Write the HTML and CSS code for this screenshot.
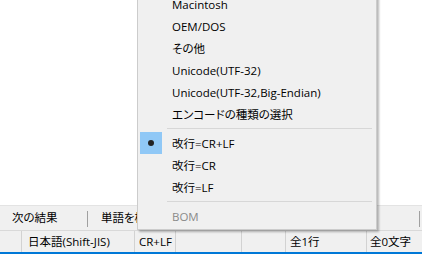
FILE: index.html
```html
<!DOCTYPE html>
<html lang="ja">
<head>
<meta charset="utf-8">
<link rel="stylesheet" href="styles.css">
</head>
<body>
<div class="app">
  <div class="editor"></div>
  <div class="findbar">
    <span class="fb-btn fb-next">次の結果</span>
    <span class="fb-sep"></span>
    <span class="fb-btn">単語を検索</span>
    <span class="fb-spacer"></span>
    <span class="fb-sep fb-sep-right"></span>
  </div>
  <div class="statusbar">
    <div class="cell c1"></div>
    <div class="cell c2">日本語(Shift-JIS)</div>
    <div class="cell c3">CR+LF</div>
    <div class="cell c4"></div>
    <div class="cell c5"></div>
    <div class="cell c6">全1行</div>
    <div class="cell c7">全0文字</div>
  </div>
  <div class="accent"></div>
</div>

<div class="menu">
  <div class="item"><span class="check"></span><span class="label">Macintosh</span></div>
  <div class="item"><span class="check"></span><span class="label">OEM/DOS</span></div>
  <div class="item"><span class="check"></span><span class="label">その他</span></div>
  <div class="item"><span class="check"></span><span class="label">Unicode(UTF-32)</span></div>
  <div class="item"><span class="check"></span><span class="label">Unicode(UTF-32,Big-Endian)</span></div>
  <div class="item"><span class="check"></span><span class="label">エンコードの種類の選択</span></div>
  <div class="sep"></div>
  <div class="item"><span class="check checked"><span class="dot"></span></span><span class="label">改行=CR+LF</span></div>
  <div class="item"><span class="check"></span><span class="label">改行=CR</span></div>
  <div class="item"><span class="check"></span><span class="label">改行=LF</span></div>
  <div class="sep"></div>
  <div class="item disabled"><span class="check"></span><span class="label">BOM</span></div>
</div>
</body>
</html>
```

FILE: styles.css
```css
html, body {
  margin: 0;
  padding: 0;
}
body {
  width: 422px;
  height: 254px;
  overflow: hidden;
  position: relative;
  background: #ffffff;
  font-family: "Open Sans", "Noto Sans CJK JP", sans-serif;
  font-size: 11.5px;
  font-feature-settings: "palt";
  color: #000;
}
.app {
  display: flex;
  flex-direction: column;
  height: 254px;
}
.editor {
  flex: 1;
  background: #ffffff;
}
.findbar {
  height: 24px;
  border-top: 1px solid #e3e3e3;
  background: #f0f0f0;
  display: flex;
  align-items: center;
}
.fb-btn {
  padding-left: 13px;
  white-space: nowrap;
  line-height: 22px;
}
.fb-next {
  width: 87px;
  padding-left: 12px;
  box-sizing: border-box;
}
.fb-sep {
  width: 1px;
  height: 16px;
  background: #a0a0a0;
  margin-top: 2px;
}
.fb-spacer {
  flex: 1;
}
.fb-sep-right {
  margin-right: 2px;
}
.statusbar {
  height: 21px;
  border-top: 1px solid #d9d9d9;
  background: #f0f0f0;
  display: flex;
}
.cell {
  height: 21px;
  line-height: 22px;
  border-left: 1px solid #d2d2d2;
  box-sizing: border-box;
  padding-left: 5px;
  white-space: nowrap;
  overflow: hidden;
}
.c1 { width: 21px; border-left: none; }
.c2 { width: 113px; padding-left: 6px; }
.c3 { width: 41px; padding-left: 4px; }
.c4 { width: 66px; }
.c5 { width: 44px; }
.c6 { width: 81px; padding-left: 4px; }
.c7 { flex: 1; padding-left: 3px; }
.accent {
  height: 2px;
  background: #0078d7;
}

.menu {
  position: absolute;
  left: 137px;
  bottom: 24px;
  padding: 2px;
  background: #f0f0f0;
  border: 1px solid #cccccc;
  box-shadow: 2px 2px 2px rgba(0, 0, 0, 0.28);
  box-sizing: content-box;
  width: 234px;
}
.item {
  display: flex;
  align-items: flex-start;
  height: 22px;
}
.check {
  width: 22px;
  height: 22px;
  flex: none;
  display: flex;
  align-items: center;
  justify-content: center;
}
.check.checked {
  background: #90c8f6;
}
.dot {
  width: 6px;
  height: 6px;
  border-radius: 50%;
  background: #222;
}
.label {
  margin-left: 10px;
  white-space: nowrap;
  line-height: 21px;
  padding-top: 1px;
}
.disabled .label {
  color: #8a8a8a;
}
.sep {
  height: 7px;
  display: flex;
  align-items: center;
  margin-left: 27px;
  margin-right: 2px;
}
.sep::before {
  content: "";
  flex: 1;
  height: 1px;
  background: #d7d7d7;
}
```
